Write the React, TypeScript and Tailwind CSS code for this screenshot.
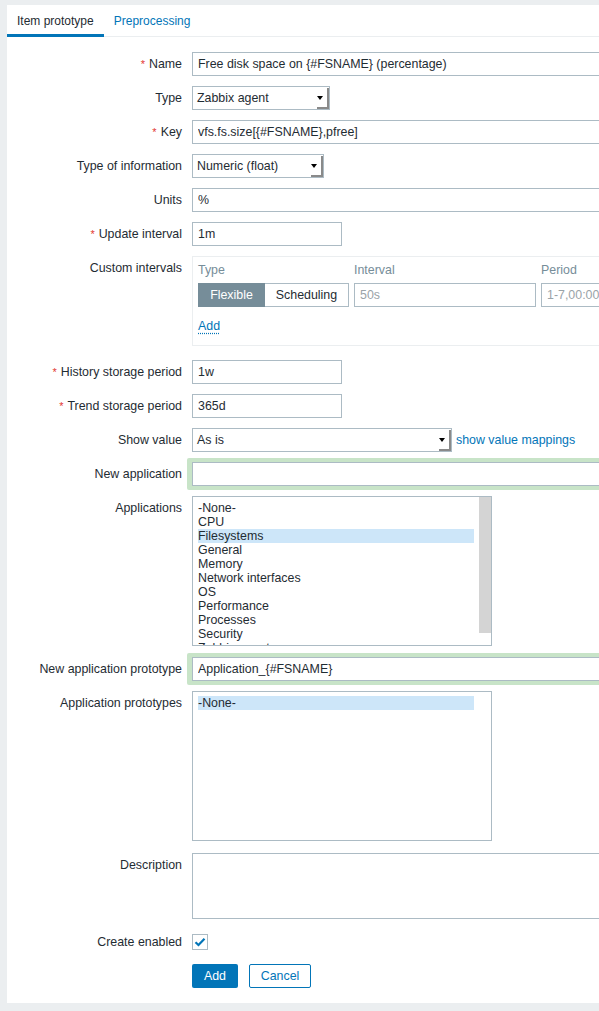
import type { ReactNode } from "react";
import clsx from "clsx";

const applications = [
  "-None-",
  "CPU",
  "Filesystems",
  "General",
  "Memory",
  "Network interfaces",
  "OS",
  "Performance",
  "Processes",
  "Security",
  "Zabbix agent",
];

function Row({
  label,
  required,
  children,
  className,
}: {
  label: string;
  required?: boolean;
  children: ReactNode;
  className?: string;
}) {
  return (
    <div className={clsx("flex items-start gap-[10px]", className)}>
      <label className="w-[175px] shrink-0 text-right leading-[24px] whitespace-nowrap">
        {required && <span className="mr-[4px] text-[11px] text-[#e33734]">*</span>}
        {label}
      </label>
      <div className="flex min-w-0 items-center">{children}</div>
    </div>
  );
}

function TextBox({ value, width, placeholder }: { value?: string; width: string; placeholder?: string }) {
  return (
    <input
      readOnly
      value={value ?? ""}
      placeholder={placeholder}
      className={clsx(
        "h-[24px] shrink-0 border border-[#acbbc4] bg-white px-[5px] text-[#1f2c33] outline-none placeholder:text-[#9aa3a8]",
        width
      )}
    />
  );
}

function Select({ value, width }: { value: string; width: string }) {
  return (
    <div
      className={clsx(
        "relative h-[24px] shrink-0 border border-[#acbbc4] bg-white pl-[4px] leading-[22px] text-[#1f2c33]",
        width
      )}
    >
      {value}
      {/* old style drop button edge */}
      <span className="absolute right-0 bottom-0 flex h-[21px] w-[12px] items-center justify-start border-r-2 border-b-2 border-[#8a8a8a]">
        <svg width="6" height="4" viewBox="0 0 6 4">
          <path d="M0 0h6L3 4z" fill="#000" />
        </svg>
      </span>
    </div>
  );
}

function ListBox({ items, selected, scroll }: { items: string[]; selected: string; scroll?: boolean }) {
  return (
    <div className="flex h-[150px] w-[300px] shrink-0 overflow-hidden border border-[#acbbc4] bg-white">
      <div className="ml-[5px] mt-[4px] w-[276px] leading-[14px]">
        {items.map((item) => (
          <div key={item} className={clsx("h-[14px] whitespace-nowrap", item === selected && "bg-[#cde6f9]")}>
            {item}
          </div>
        ))}
      </div>
      {scroll && <div className="ml-[5px] h-[136px] w-[12px] bg-[#d4d4d4]" />}
    </div>
  );
}

export default function App() {
  return (
    <div className="h-screen overflow-hidden bg-[#ebeef0] pt-[5px] pl-[7px] font-['Liberation_Sans',Arial,sans-serif] text-[12.4px] text-[#1f2c33]">
      <div className="w-[720px] bg-white pb-[15px]">
        <nav className="flex h-[32px] border-b border-[#ebeef0] text-[12px]">
          <span className="-mb-px flex h-[32px] items-center border-b-[3px] border-[#0275b8] px-[10px] pt-[3px]">
            Item prototype
          </span>
          <span className="flex h-[31px] items-center px-[10px] text-[#0275b8]">Preprocessing</span>
        </nav>

        <form className="flex flex-col gap-[10px] pt-[15px]">
          <Row label="Name" required>
            <TextBox width="w-[453px]" value="Free disk space on {#FSNAME} (percentage)" />
          </Row>
          <Row label="Type">
            <Select width="w-[138px]" value="Zabbix agent" />
          </Row>
          <Row label="Key" required>
            <TextBox width="w-[453px]" value="vfs.fs.size[{#FSNAME},pfree]" />
          </Row>
          <Row label="Type of information">
            <Select width="w-[132px]" value="Numeric (float)" />
          </Row>
          <Row label="Units">
            <TextBox width="w-[453px]" value="%" />
          </Row>
          <Row label="Update interval" required>
            <TextBox width="w-[150px]" value="1m" />
          </Row>
          <Row label="Custom intervals" className="mb-[4px]">
            <div className="w-[460px] border border-[#ebeef0] px-[5px] pt-[5px] pb-[11px]">
              <div className="flex gap-[5px] leading-[16px] text-[#768d99]">
                <span className="w-[151px]">Type</span>
                <span className="w-[182px]">Interval</span>
                <span>Period</span>
              </div>
              <div className="mt-[5px] flex gap-[5px]">
                <div className="flex h-[24px] w-[151px]">
                  <span className="flex w-[67px] items-center justify-center border border-[#768d99] bg-[#768d99] text-white">
                    Flexible
                  </span>
                  <span className="flex w-[84px] items-center justify-center border border-l-0 border-[#acbbc4]">
                    Scheduling
                  </span>
                </div>
                <TextBox width="w-[182px]" placeholder="50s" />
                <TextBox width="w-[120px]" placeholder="1-7,00:00-24:00" />
              </div>
              <a className="mt-[11px] block w-fit leading-[16px] text-[#0275b8] underline decoration-dotted underline-offset-[3px]">
                Add
              </a>
            </div>
          </Row>
          <Row label="History storage period" required>
            <TextBox width="w-[150px]" value="1w" />
          </Row>
          <Row label="Trend storage period" required>
            <TextBox width="w-[150px]" value="365d" />
          </Row>
          <Row label="Show value">
            <Select width="w-[260px]" value="As is" />
            <a className="ml-[4px] whitespace-nowrap text-[#0275b8]">show value mappings</a>
          </Row>
          <Row label="New application">
            <div className="-my-[4px] -ml-[5px] rounded-[2px] bg-[#c8e4c8] px-[5px] py-[4px]">
              <TextBox width="w-[453px]" />
            </div>
          </Row>
          <Row label="Applications">
            <ListBox items={applications} selected="Filesystems" scroll />
          </Row>
          <Row label="New application prototype" className="mt-[1px]">
            <div className="-my-[4px] -ml-[5px] rounded-[2px] bg-[#c8e4c8] px-[5px] py-[4px]">
              <TextBox width="w-[453px]" value="Application_{#FSNAME}" />
            </div>
          </Row>
          <Row label="Application prototypes">
            <ListBox items={["-None-"]} selected="-None-" />
          </Row>
          <Row label="Description" className="mt-[2px]">
            <textarea readOnly className="h-[66px] w-[453px] resize-none border border-[#acbbc4] outline-none" />
          </Row>
          <Row label="Create enabled" className="mt-[1px]">
            <span className="flex h-[24px] items-center">
              <span className="flex h-[16px] w-[16px] items-center justify-center border border-[#acbbc4] bg-white">
                <svg width="12" height="10" viewBox="0 0 12 10">
                  <path d="M1.5 5.2 4.5 8 10.5 1.8" fill="none" stroke="#0275b8" strokeWidth="2.2" />
                </svg>
              </span>
            </span>
          </Row>
          <div className="flex gap-[11px] pl-[185px]">
            <button type="button" className="h-[24px] w-[46px] rounded-[2px] bg-[#0275b8] text-white">
              Add
            </button>
            <button
              type="button"
              className="h-[24px] w-[62px] rounded-[2px] border border-[#0275b8] bg-white text-[#0275b8]"
            >
              Cancel
            </button>
          </div>
        </form>
      </div>
    </div>
  );
}
